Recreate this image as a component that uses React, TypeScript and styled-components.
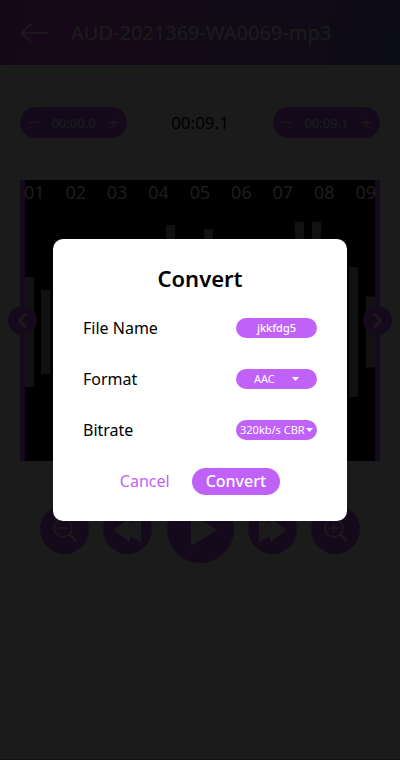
import React from "react";
import styled, { createGlobalStyle } from "styled-components";

const accent = "#c062f8";

const GlobalStyle = createGlobalStyle`
  *, *::before, *::after { box-sizing: border-box; }
  body { margin: 0; background: #fff; }
  body, button, input, select { font-family: "Noto Sans", "Open Sans", sans-serif; }
  button, input, select { border: 0; margin: 0; padding: 0; }
  button { cursor: pointer; }
  svg { display: block; }
`;

const Screen = styled.div`
  min-height: 100vh;
  display: flex;
  flex-direction: column;
  background: #fff;
  border-bottom: 1px solid #e080b0;
`;

const Header = styled.header`
  display: flex;
  align-items: center;
  gap: 22px;
  height: 65px;
  padding: 0 20px;
  background: linear-gradient(100deg, #d048e0 0%, #c850dc 38%, #a868d8 48%, #9068d8 78%, #6468c8 100%);
`;

const BackButton = styled.button`
  background: none;
  color: #fff;
`;

const TrackTitle = styled.h1`
  margin: 0;
  font-size: 20px;
  line-height: 24px;
  font-weight: 400;
  color: #fff;
  white-space: nowrap;
`;

const TimeRow = styled.section`
  display: flex;
  align-items: center;
  justify-content: space-between;
  padding: 42px 20px 0;
`;

const Stepper = styled.div`
  display: grid;
  grid-template-columns: 27px 53px 27px;
  align-items: center;
  height: 31px;
  border-radius: 16px;
  background: ${accent};
`;

const StepButton = styled.button`
  display: grid;
  place-items: center;
  height: 31px;
  background: none;
  color: #fff;
`;

const StepInput = styled.input`
  width: 100%;
  height: 21px;
  text-align: center;
  font-size: 13px;
  color: #fff;
  background: #a85cf0;
`;

const Duration = styled.output`
  font-size: 17px;
  line-height: 24px;
  color: #000;
`;

const Track = styled.section`
  position: relative;
  height: 281px;
  margin: 42px 20px 0;
  background: #000;
  border: solid ${accent};
  border-width: 0 5px;
`;

const Ruler = styled.div`
  display: flex;
  justify-content: space-between;
  height: 24px;
  margin: 0 -1px;
  font-size: 18px;
  line-height: 24px;
  color: #fff;
`;

const Wave = styled.svg`
  width: 100%;
  height: 257px;
  fill: #a0a0a0;
`;

const Handle = styled.button<{ $side: "left" | "right" }>`
  position: absolute;
  top: 126px;
  ${({ $side }) => $side}: -17px;
  display: grid;
  place-items: center;
  width: 29px;
  height: 29px;
  border-radius: 50%;
  background: ${accent};
  color: #fff;
`;

const Player = styled.nav`
  display: flex;
  align-items: center;
  justify-content: space-between;
  padding: 35px 40px 0;
`;

const RoundButton = styled.button<{ $large?: boolean }>`
  display: grid;
  place-items: center;
  width: ${({ $large }) => ($large ? 67 : 49)}px;
  height: ${({ $large }) => ($large ? 67 : 49)}px;
  border-radius: 50%;
  background: ${accent};
  color: #fff;
`;

const Backdrop = styled.div`
  position: fixed;
  inset: 0;
  display: flex;
  align-items: center;
  justify-content: center;
  padding: 0 53px;
  background: rgba(0, 0, 0, 0.894);
`;

const Dialog = styled.form`
  width: 100%;
  max-width: 320px;
  padding: 24px 30px 26px;
  border-radius: 10px;
  background: #fff;
`;

const DialogTitle = styled.h2`
  margin: 0 0 24px;
  font-size: 22px;
  line-height: 30px;
  font-weight: 600;
  text-align: center;
  color: #000;
`;

const Field = styled.div`
  display: flex;
  align-items: center;
  justify-content: space-between;
  height: 21px;
  margin-bottom: 30px;
`;

const FieldLabel = styled.label`
  font-size: 16px;
  line-height: 20px;
  color: #000;
`;

const NameInput = styled.input`
  width: 81px;
  height: 20px;
  border-radius: 10px;
  background: ${accent};
  color: #fff;
  font-size: 11px;
  font-weight: 500;
  text-align: center;
`;

const Picker = styled.div<{ $caret: number }>`
  display: grid;
  align-items: center;
  width: 81px;

  > * { grid-area: 1 / 1; }
  > svg {
    justify-self: end;
    margin-right: ${({ $caret }) => $caret}px;
    pointer-events: none;
  }
`;

const Select = styled.select<{ $start: number }>`
  appearance: none;
  width: 100%;
  height: 20px;
  padding-left: ${({ $start }) => $start}px;
  border-radius: 10px;
  background: ${accent};
  color: #fff;
  font-size: 11px;
`;

const Actions = styled.div`
  display: flex;
  justify-content: center;
  gap: 22px;
  margin-top: -2px;
`;

const ActionButton = styled.button<{ $primary?: boolean }>`
  height: 27px;
  padding: ${({ $primary }) => ($primary ? "0 14px" : "0")};
  border-radius: 14px;
  font-size: 16px;
  line-height: 27px;
  font-weight: ${({ $primary }) => ($primary ? 500 : 400)};
  color: ${({ $primary }) => ($primary ? "#fff" : accent)};
  background: ${({ $primary }) => ($primary ? accent : "none")};
`;

const ticks = ["01", "02", "03", "04", "05", "06", "07", "08", "09"];

const bars = [
  [0, 110], [16, 84], [34, 120], [52, 150], [70, 96], [88, 130], [106, 170],
  [124, 140], [141, 214], [160, 150], [179, 206], [197, 160], [215, 120],
  [234, 172], [252, 140], [270, 220], [287, 220], [306, 150], [324, 130], [341, 71],
];

const Sign = ({ plus }: { plus?: boolean }) => (
  <svg width="9" height="9" viewBox="0 0 9 9" stroke="currentColor" aria-hidden="true">
    <path d={plus ? "M0 4.500h9M4.500 0v9" : "M0 4.500h9"} />
  </svg>
);

const Caret = () => (
  <svg width="7" height="4" viewBox="0 0 7 4" fill="#fff" aria-hidden="true">
    <path d="M0 0h7L3.5 4z" />
  </svg>
);

const Chevron = ({ d }: { d: string }) => (
  <svg width="15" height="15" viewBox="0 0 15 15" fill="none" stroke="currentColor" strokeWidth="2.6" strokeLinecap="round" strokeLinejoin="round" aria-hidden="true">
    <path d={d} />
  </svg>
);

const Magnifier = ({ plus }: { plus?: boolean }) => (
  <svg width="24" height="24" viewBox="0 0 24 24" fill="none" stroke="currentColor" strokeWidth="1.4" strokeLinecap="round" aria-hidden="true">
    <circle cx="10" cy="10" r="9" />
    <path d="M16.5 16.5L22.500 22.500" strokeWidth="1.8" />
    <path d={plus ? "M5 10h10M10 5v10" : "M5 10h10"} />
  </svg>
);

const TimeStepper = ({ label, value }: { label: string; value: string }) => (
  <Stepper>
    <StepButton type="button" aria-label={`Decrease ${label}`}><Sign /></StepButton>
    <StepInput aria-label={label} defaultValue={value} />
    <StepButton type="button" aria-label={`Increase ${label}`}><Sign plus /></StepButton>
  </Stepper>
);

export default function App() {
  return (
    <>
      <GlobalStyle />
      <Screen>
        <Header>
          <BackButton type="button" aria-label="Back">
            <svg width="29" height="20" viewBox="0 0 29 20" fill="none" stroke="currentColor" strokeWidth="1.6" strokeLinecap="round" strokeLinejoin="round">
              <path d="M28 10H1.5M11 1L1.5 10l9.500 9" />
            </svg>
          </BackButton>
          <TrackTitle>AUD-2021369-WA0069-mp3</TrackTitle>
        </Header>

        <TimeRow>
          <TimeStepper label="start time" value="00:00.0" />
          <Duration>00:09.1</Duration>
          <TimeStepper label="end time" value="00:09.1" />
        </TimeRow>

        <Track>
          <Ruler>
            {ticks.map((tick) => <span key={tick}>{tick}</span>)}
          </Ruler>
          <Wave viewBox="0 0 350 257" preserveAspectRatio="none" aria-hidden="true">
            {bars.map(([x, height]) => (
              <rect key={x} x={x} y={128 - height / 2} width="9" height={height} />
            ))}
          </Wave>
          <Handle type="button" $side="left" aria-label="Trim start">
            <Chevron d="M10 1.500L4.500 7.500l5.500 6" />
          </Handle>
          <Handle type="button" $side="right" aria-label="Trim end">
            <Chevron d="M5 1.500l5.500 6L5 13.500" />
          </Handle>
        </Track>

        <Player aria-label="Playback">
          <RoundButton type="button" aria-label="Zoom out"><Magnifier /></RoundButton>
          <RoundButton type="button" aria-label="Rewind">
            <svg width="28" height="24" viewBox="0 0 28 24" fill="currentColor" aria-hidden="true">
              <path d="M0 12L16 0v6l11-6v24l-11-6v6z" />
            </svg>
          </RoundButton>
          <RoundButton type="button" $large aria-label="Play">
            <svg width="34" height="32" viewBox="0 0 34 32" fill="currentColor" aria-hidden="true">
              <path d="M8 0l26 16L8 32z" />
            </svg>
          </RoundButton>
          <RoundButton type="button" aria-label="Fast forward">
            <svg width="28" height="24" viewBox="0 0 28 24" fill="currentColor" aria-hidden="true">
              <path d="M28 12L12 0v6L1 0v24l11-6v6z" />
            </svg>
          </RoundButton>
          <RoundButton type="button" aria-label="Zoom in"><Magnifier plus /></RoundButton>
        </Player>
      </Screen>

      <Backdrop>
        <Dialog role="dialog" aria-modal="true" aria-labelledby="convert-title" onSubmit={(e) => e.preventDefault()}>
          <DialogTitle id="convert-title">Convert</DialogTitle>
          <Field>
            <FieldLabel htmlFor="file-name">File Name</FieldLabel>
            <NameInput id="file-name" defaultValue="jkkfdg5" />
          </Field>
          <Field>
            <FieldLabel htmlFor="format">Format</FieldLabel>
            <Picker $caret={18}>
              <Select id="format" $start={18}><option>AAC</option></Select>
              <Caret />
            </Picker>
          </Field>
          <Field>
            <FieldLabel htmlFor="bitrate">Bitrate</FieldLabel>
            <Picker $caret={4}>
              <Select id="bitrate" $start={4}><option>320kb/s CBR</option></Select>
              <Caret />
            </Picker>
          </Field>
          <Actions>
            <ActionButton type="button">Cancel</ActionButton>
            <ActionButton type="submit" $primary>Convert</ActionButton>
          </Actions>
        </Dialog>
      </Backdrop>
    </>
  );
}
